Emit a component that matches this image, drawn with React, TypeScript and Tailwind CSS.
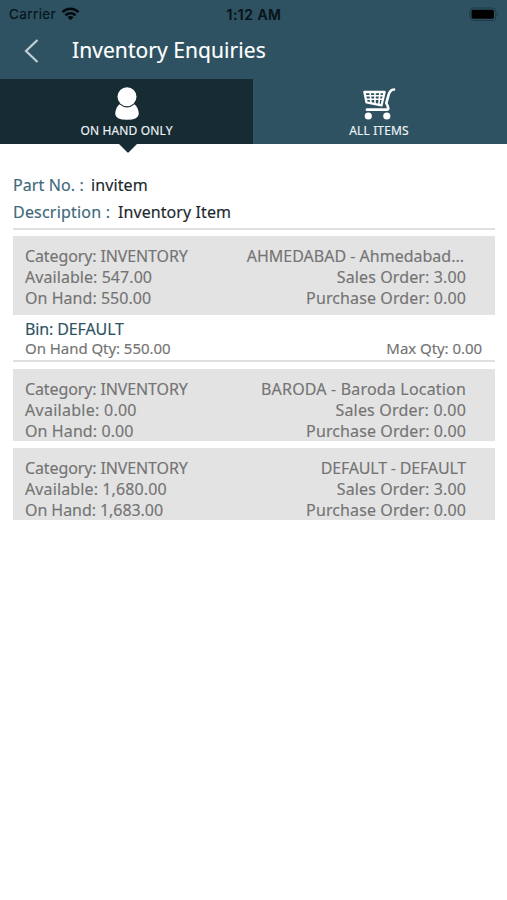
import type { ReactNode } from "react";

type Line = { text: string; tracking?: string };
type Stock = { left: Line[]; right: Line[]; height: string };

const stocks: Stock[] = [
  {
    height: "h-[79px]",
    left: [
      { text: "Category: INVENTORY", tracking: "tracking-[-0.12px]" },
      { text: "Available: 547.00", tracking: "tracking-[0.06px]" },
      { text: "On Hand: 550.00", tracking: "tracking-[0.04px]" },
    ],
    right: [
      { text: "AHMEDABAD - Ahmedabad...", tracking: "pr-[2px]" },
      { text: "Sales Order: 3.00", tracking: "tracking-[0.12px]" },
      { text: "Purchase Order: 0.00", tracking: "tracking-[0.11px]" },
    ],
  },
  {
    height: "h-[72px]",
    left: [
      { text: "Category: INVENTORY", tracking: "tracking-[-0.12px]" },
      { text: "Available: 0.00", tracking: "tracking-[0.27px]" },
      { text: "On Hand: 0.00", tracking: "tracking-[0.1px]" },
    ],
    right: [
      { text: "BARODA - Baroda Location", tracking: "tracking-[0.18px]" },
      { text: "Sales Order: 0.00", tracking: "tracking-[0.2px]" },
      { text: "Purchase Order: 0.00", tracking: "tracking-[0.11px]" },
    ],
  },
  {
    height: "h-[72px]",
    left: [
      { text: "Category: INVENTORY", tracking: "tracking-[-0.12px]" },
      { text: "Available: 1,680.00", tracking: "tracking-[0.12px]" },
      { text: "On Hand: 1,683.00", tracking: "tracking-[-0.06px]" },
    ],
    right: [
      { text: "DEFAULT - DEFAULT", tracking: "tracking-[-0.18px]" },
      { text: "Sales Order: 3.00", tracking: "tracking-[0.12px]" },
      { text: "Purchase Order: 0.00", tracking: "tracking-[0.11px]" },
    ],
  },
];

function Lines({ items, align }: { items: Line[]; align: string }) {
  return (
    <div className={`flex flex-col ${align}`}>
      {items.map((l) => (
        <span key={l.text} className={`whitespace-nowrap ${l.tracking ?? ""}`}>
          {l.text}
        </span>
      ))}
    </div>
  );
}

function StockCard({ stock }: { stock: Stock }) {
  return (
    <div
      className={`flex justify-between bg-[#e3e3e3] pt-[10px] pr-[29px] pl-3 text-[16px] leading-[20.8px] text-[#747474] ${stock.height}`}
    >
      <Lines items={stock.left} align="items-start" />
      <Lines items={stock.right} align="items-end" />
    </div>
  );
}

function Tab({ label, active, children }: { label: string; active?: boolean; children: ReactNode }) {
  return (
    <div
      className={`relative flex flex-col items-center pt-[7px] ${active ? "w-[253px] bg-[#172b33]" : "w-[254px] bg-[#2e5261] pr-[2px]"}`}
    >
      <div className="flex h-[36px] items-start">{children}</div>
      <span className="text-[12px] leading-[18px] tracking-[0.15px] text-[#eef4f6]">{label}</span>
      {active && (
        <svg className="absolute top-full left-1/2 -ml-[8px]" width="18" height="9" viewBox="0 0 18 9">
          <path d="M0 0H18L10 8Q9 9 8 8Z" fill="#172b33" />
        </svg>
      )}
    </div>
  );
}

export default function App() {
  return (
    <div className="flex h-[900px] w-[507px] flex-col overflow-hidden bg-white font-['Noto_Sans',sans-serif] [-webkit-text-stroke:0.15px]">
      <header className="h-[79px] bg-[#2e5261]">
        <div className="grid h-7 grid-cols-3 items-center pr-[8px] pl-[9px] font-['Inter',sans-serif] text-[#07131a]">
          <div className="flex items-center gap-[5px]">
            <span className="text-[13.5px] leading-7 tracking-[0.4px]">Carrier</span>
            <svg width="19" height="14" viewBox="0 0 18 14" fill="none" stroke="#020a0e" strokeWidth="2.5">
              <path d="M1 5.2C5.6.7 12.4.7 17 5.2" />
              <path d="M3.9 8.3C6.8 5.5 11.2 5.5 14.1 8.3" />
              <path d="M9 13.3 6 10.3Q9 7.8 12 10.3Z" fill="#020a0e" stroke="none" />
            </svg>
          </div>
          <span className="text-center text-[14px] font-semibold tracking-[0.45px]">1:12 AM</span>
          <svg className="justify-self-end" width="30" height="15" viewBox="0 0 30 15">
            <rect x=".8" y="1" width="26" height="12.5" rx="3.5" fill="none" stroke="#1d3a46" />
            <rect x="2.5" y="2.8" width="22.5" height="9" rx="1.8" fill="#000" />
            <path d="M28 5.2Q30 7.2 28 9.3Z" fill="#1d3a46" />
          </svg>
        </div>
        <div className="flex h-[46px] items-center pl-6">
          <svg width="15" height="24" viewBox="0 0 15 24" fill="none" stroke="#c3d0d6" strokeWidth="2.2">
            <path d="M13.5 1 2 12 13.5 23" />
          </svg>
          <h1 className="pb-[2px] pl-[33px] text-[21px] leading-[44px] tracking-[0.06px] text-white">
            Inventory Enquiries
          </h1>
        </div>
      </header>

      <nav className="flex h-[65px]">
        <Tab label="ON HAND ONLY" active>
          <svg width="26" height="35" viewBox="0 -0.7 26 35" fill="#fff">
            <path d="M5.5 17.5Q13 24 20.5 17.5Q24.3 20.5 24.8 27Q24.8 33 13 33Q1.2 33 1.2 27Q1.7 20.5 5.5 17.5Z" />
            <circle cx="13" cy="10" r="9.5" />
          </svg>
        </Tab>
        <Tab label="ALL ITEMS">
          <svg width="34" height="35" viewBox="0 0 34 35" fill="none" stroke="#fff">
            <path
              d="M32 3.5C28.5 3.5 27.3 6 26.4 9.5L24.3 17C25.8 20 27.5 23.7 24.8 23.7H5"
              strokeWidth="2.7"
              strokeLinecap="round"
              strokeLinejoin="round"
            />
            <path d="M2.4 6H22.6L19.5 19.4 4.5 16.4Z" strokeWidth="2.3" strokeLinejoin="round" />
            <path d="M8 6 9 17M13 6V18M18 6 16.8 18.5M3 9.7H22M3.8 13.2H21" strokeWidth="1.6" />
            <circle cx="6.3" cy="30" r="3.6" fill="#fff" stroke="none" />
            <circle cx="24.8" cy="30" r="3.6" fill="#fff" stroke="none" />
          </svg>
        </Tab>
      </nav>

      <main className="pt-[28px] pr-[12px] pl-[13px]">
        <section className="h-[58px] border-b-2 border-[#dfdfdf] text-[16px] leading-[27px]">
          <div className="flex">
            <span className="w-[78px] whitespace-nowrap tracking-[0.1px] text-[#40687a]">Part No. :</span>
            <span className="tracking-[0.1px] text-[#20282d]">invitem</span>
          </div>
          <div className="flex">
            <span className="w-[105px] whitespace-nowrap tracking-[0.2px] text-[#40687a]">Description :</span>
            <span className="tracking-[0.08px] text-[#20282d]">Inventory Item</span>
          </div>
        </section>

        <div className="pt-[6px]">
          <StockCard stock={stocks[0]} />
        </div>
        <div className="h-[47px] border-b-2 border-[#dfdfdf] pt-[4px] pr-[13px] pl-3">
          <div className="text-[16px] leading-[20px] tracking-[-0.12px] text-[#2e5261]">Bin: DEFAULT</div>
          <div className="flex justify-between text-[15px] leading-[19px] tracking-[-0.05px] text-[#747474]">
            <span>On Hand Qty: 550.00</span>
            <span>Max Qty: 0.00</span>
          </div>
        </div>
        <div className="flex flex-col gap-[7px] pt-[7px]">
          <StockCard stock={stocks[1]} />
          <StockCard stock={stocks[2]} />
        </div>
      </main>
    </div>
  );
}
